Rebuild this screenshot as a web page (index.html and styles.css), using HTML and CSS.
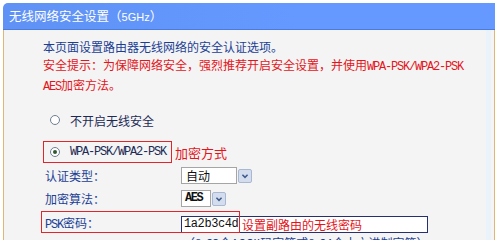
FILE: index.html
```html
<!DOCTYPE html>
<html lang="zh-CN">
<head>
<meta charset="utf-8">
<link rel="stylesheet" href="styles.css">
</head>
<body>
<div class="panel">
  <div class="hd">无线网络安全设置（<span class="ghz">5GHz</span>）</div>
  <div class="bd">
    <p class="intro">本页面设置路由器无线网络的安全认证选项。</p>
    <p class="warn">安全提示：为保障网络安全，强烈推荐开启安全设置，并使用<span class="mono">WPA-PSK/WPA2-PSK</span><br><span class="mono">AES</span>加密方法。</p>
    <div class="opt opt-off"><span class="radio"></span><span>不开启无线安全</span></div>
    <div class="opt-row">
      <div class="opt mark"><span class="radio on"></span><span class="mono">WPA-PSK/WPA2-PSK</span></div>
      <span class="note">加密方式</span>
    </div>
    <div class="form">
      <div class="frow">
        <span class="lbl">认证类型：</span>
        <div class="ctrl"><span class="sel w1">自动</span><span class="arrow"><svg viewBox="0 0 14 14" width="14" height="14"><path d="M4 5.5 L7 8.5 L10 5.5" fill="none" stroke="#3f5a8c" stroke-width="1.8"/></svg></span></div>
      </div>
      <div class="frow">
        <span class="lbl">加密算法：</span>
        <div class="ctrl"><span class="sel w2 mono">AES</span><span class="arrow"><svg viewBox="0 0 14 14" width="14" height="14"><path d="M4 5.5 L7 8.5 L10 5.5" fill="none" stroke="#3f5a8c" stroke-width="1.8"/></svg></span></div>
      </div>
      <div class="frow psk">
        <span class="lbl"><span class="mono">PSK</span>密码：</span>
        <div class="ctrl"><span class="input"><span class="mono pw">1a2b3c4d</span><span class="note2">设置副路由的无线密码</span></span></div>
        <span class="annot"></span>
      </div>
      <div class="hint">（8-63个ASCII码字符或8-64个十六进制字符）</div>
    </div>
  </div>
</div>
</body>
</html>
```
FILE: styles.css
```css
html, body {
  margin: 0;
  padding: 0;
  background: #ffffff;
  width: 500px;
  height: 240px;
  overflow: hidden;
}
body {
  font-family: "Noto Sans CJK SC", "Liberation Sans", sans-serif;
  font-size: 12px;
  color: #1c3f94;
}
.panel {
  margin: 3px 0 0 3px;
  width: 492px;
}
.hd {
  height: 26px;
  line-height: 26px;
  background: linear-gradient(to right, #5f92f4, #6699ff 60%);
  border-bottom: 1px solid #4a7ce0;
  border-top-left-radius: 5px;
  color: #ffffff;
  font-size: 12.5px;
  padding-left: 6px;
}
.ghz {
  font-family: "Liberation Sans", sans-serif;
  font-size: 11px;
}
.bd {
  height: 214px;
  border-left: 1px solid #e0b676;
  border-right: 1px solid #e0b676;
  background: linear-gradient(to left, #f4f4f4 0 3px, #eaf2fa 3px 8px, #f4f4f4 8px);
  padding: 8px 0 0 39px;
  box-sizing: border-box;
  overflow: hidden;
}
.intro, .warn {
  margin: 0;
  line-height: 18px;
}
.warn {
  color: #e4141b;
}
.mono {
  font-family: "Liberation Mono", monospace;
  letter-spacing: -1.2px;
}
.opt {
  display: flex;
  align-items: center;
  gap: 10px;
  height: 18px;
}
.opt-off {
  margin-top: 15px;
  padding-left: 7px;
  color: #1c2a55;
}
.radio {
  width: 8px;
  height: 8px;
  border: 1px solid #6d7f92;
  border-radius: 50%;
  background: #ffffff;
  display: flex;
  align-items: center;
  justify-content: center;
}
.radio.on::after {
  content: "";
  width: 4px;
  height: 4px;
  border-radius: 50%;
  background: #2f5a2f;
}
.opt-row {
  margin-top: 12px;
  display: flex;
  align-items: center;
  gap: 3px;
}
.mark {
  height: 20px;
  width: 121px;
  border: 1px solid #e0262c;
  padding-left: 6px;
  box-sizing: content-box;
  color: #1c2a55;
}
.note {
  color: #e4141b;
  font-size: 13px;
}
.form {
  margin-top: 4px;
}
.frow {
  display: grid;
  grid-template-columns: 138px auto;
  align-items: center;
  height: 17px;
  margin-bottom: 6px;
  position: relative;
}
.frow + .frow {
  margin-bottom: 7px;
}
.frow.psk {
  margin-bottom: 0;
}
.lbl {
  padding-left: 2px;
  line-height: 17px;
}
.ctrl {
  display: flex;
  align-items: center;
  gap: 1px;
}
.sel {
  height: 15px;
  line-height: 15px;
  border: 1px solid #a5a5a5;
  background: #ffffff;
  color: #111111;
  padding-left: 4px;
  box-sizing: content-box;
}
.w1 { width: 50px; }
.w2 { width: 25px; padding-left: 3px; font-weight: bold; letter-spacing: -1.5px; }
.arrow {
  width: 12px;
  height: 12px;
  border: 1px solid #a9b8d2;
  background: #d3ddee;
  display: flex;
  align-items: center;
  justify-content: center;
  border-radius: 2px;
}
.arrow svg { display: block; }
.input {
  width: 243px;
  height: 15px;
  border: 1px solid #26306e;
  background: #ffffff;
  display: flex;
  align-items: center;
  padding-left: 2px;
  box-sizing: content-box;
}
.pw {
  color: #111111;
  letter-spacing: -0.4px;
  width: 58px;
}
.note2 {
  color: #e4141b;
  font-size: 12px;
}
.annot {
  position: absolute;
  left: -2px;
  top: -3px;
  width: 197px;
  height: 20px;
  border: 1px solid #e0262c;
  pointer-events: none;
}
.hint {
  margin-top: 3px;
  padding-left: 140px;
  line-height: 18px;
  color: #1c3f94;
  white-space: nowrap;
}
```
